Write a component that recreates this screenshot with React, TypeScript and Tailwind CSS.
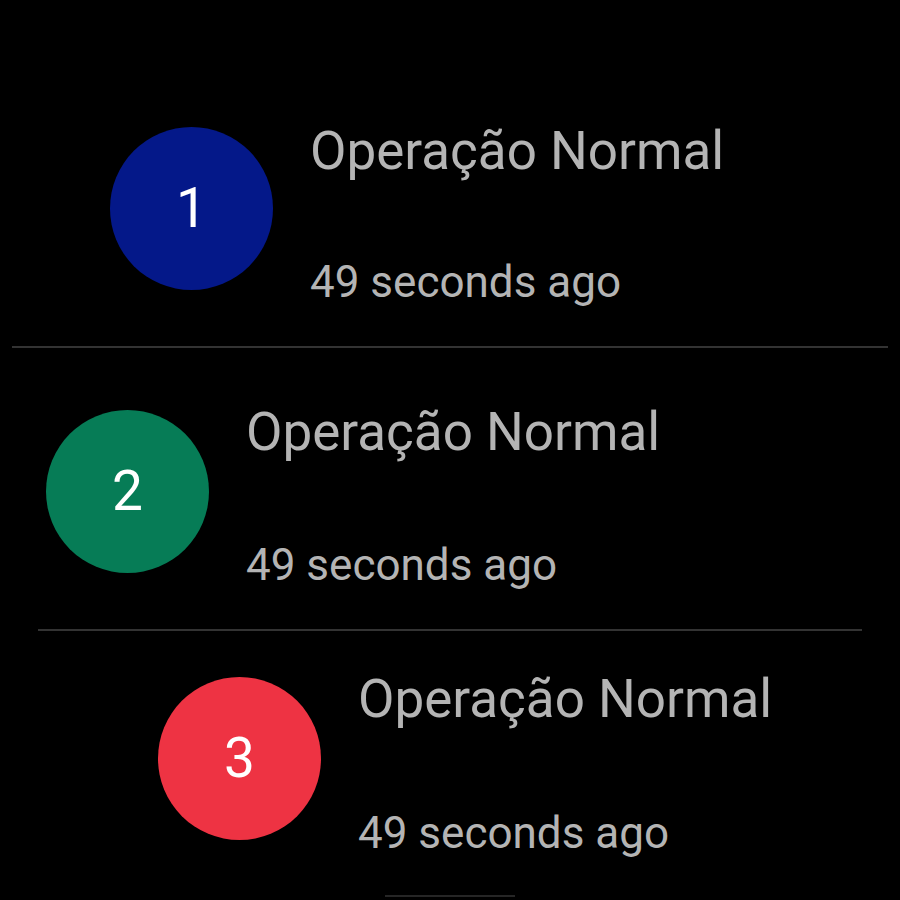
import React from "react";

function Item({
  n,
  colorClass,
  plClass,
  circleMtClass,
  gapClass,
}: {
  n: number;
  colorClass: string;
  plClass: string;
  circleMtClass: string;
  gapClass: string;
}) {
  return (
    <div className={`flex items-start ${plClass}`}>
      <div
        className={`flex h-[163px] w-[163px] shrink-0 items-center justify-center rounded-full ${colorClass} ${circleMtClass}`}
      >
        <span className="text-[55px] leading-none text-white">{n}</span>
      </div>
      <div className="ml-[37px] flex flex-col">
        <span className="text-[53px] leading-[60px] text-[#b4b4b4] whitespace-nowrap">
          Operação Normal
        </span>
        <span
          className={`text-[44px] leading-[52px] text-[#b4b4b4] whitespace-nowrap ${gapClass}`}
        >
          49 seconds ago
        </span>
      </div>
    </div>
  );
}

export default function App() {
  return (
    <div
      className="relative h-[900px] w-[900px] overflow-hidden bg-black"
      style={{ fontFamily: "Roboto, 'Noto Sans', sans-serif" }}
    >
      <div className="flex flex-col pt-[121px]">
        <Item
          n={1}
          colorClass="bg-[#041889]"
          plClass="pl-[110px]"
          circleMtClass="mt-[6px]"
          gapClass="mt-[75px]"
        />
        <div className="mx-[12px] mt-[38px] h-[2px] bg-[#333333]" />
        <div className="mt-[54px]">
          <Item
            n={2}
            colorClass="bg-[#067c56]"
            plClass="pl-[46px]"
            circleMtClass="mt-[8px]"
            gapClass="mt-[77px]"
          />
        </div>
        <div className="mx-[38px] mt-[38px] h-[2px] bg-[#333333]" />
        <div className="mt-[38px]">
          <Item
            n={3}
            colorClass="bg-[#ee3343]"
            plClass="pl-[158px]"
            circleMtClass="mt-[8px]"
            gapClass="mt-[78px]"
          />
        </div>
      </div>
      <div className="absolute left-[385px] top-[895px] h-[2px] w-[130px] bg-[#262626]" />
    </div>
  );
}
